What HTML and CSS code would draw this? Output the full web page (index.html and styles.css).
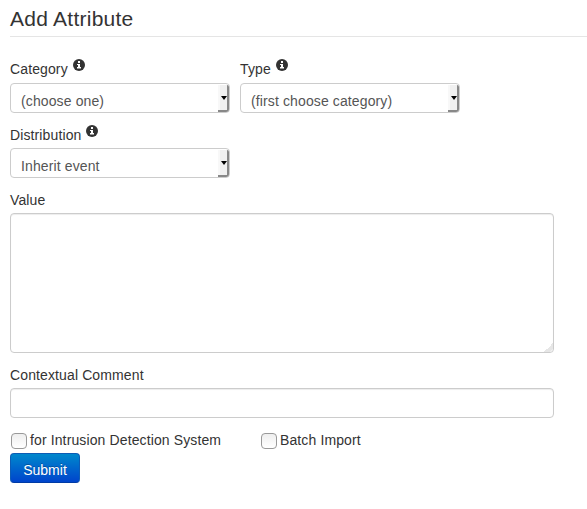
FILE: index.html
```
<!DOCTYPE html>
<html lang="en">
<head>
<meta charset="utf-8">
<title>Add Attribute</title>
<link rel="stylesheet" href="styles.css">
</head>
<body>
<svg class="defs" aria-hidden="true">
  <symbol id="info" viewBox="0 0 12 12">
    <circle cx="6" cy="6" r="6" fill="#333"/>
    <path d="M5 2h2v2H5zM4 5h3v3h1v1.4H4V8h1V6H4z" fill="#fff"/>
  </symbol>
</svg>
<form class="form">
  <h1 class="legend">Add Attribute</h1>
  <div class="row">
    <div class="field">
      <label class="label"><span>Category</span><svg class="info"><use href="#info"/></svg></label>
      <div class="select"><span class="select-text">(choose one)</span><span class="arrow"></span></div>
    </div>
    <div class="field">
      <label class="label"><span>Type</span><svg class="info"><use href="#info"/></svg></label>
      <div class="select"><span class="select-text">(first choose category)</span><span class="arrow"></span></div>
    </div>
  </div>
  <div class="field">
    <label class="label"><span>Distribution</span><svg class="info"><use href="#info"/></svg></label>
    <div class="select"><span class="select-text">Inherit event</span><span class="arrow"></span></div>
  </div>
  <div class="field">
    <label class="label" for="value">Value</label>
    <div class="area-wrap">
      <textarea class="control area" id="value"></textarea>
      <svg class="grip" viewBox="0 0 9 9"><path d="M8 0h1v6L6 9H0V8h1V7h1V6h2V5h1V4h1V3h1V1h1z" fill="#e6e6e6"/></svg>
    </div>
  </div>
  <div class="field">
    <label class="label" for="comment">Contextual Comment</label>
    <input class="control" id="comment" type="text">
  </div>
  <div class="checks">
    <label class="check"><input class="box" type="checkbox"><span>for Intrusion Detection System</span></label>
    <label class="check"><input class="box" type="checkbox"><span>Batch Import</span></label>
  </div>
  <button class="submit" type="button">Submit</button>
</form>
</body>
</html>
```
FILE: styles.css
```
* { box-sizing: border-box; }
body {
  margin: 0;
  background: #fff;
  color: #333;
  font: 14px/20px "Liberation Sans", Arial, sans-serif;
  letter-spacing: .12px;
  overflow: hidden;
}
.defs { display: none; }
.form { padding-left: 10px; }
.legend {
  height: 37px;
  margin: 0 0 22px;
  border-bottom: 1px solid #e5e5e5;
  font-size: 21px;
  font-weight: 400;
  line-height: 38px;
  letter-spacing: .25px;
}
.field { margin-bottom: 12px; }
.label { display: flex; height: 20px; margin-bottom: 3px; }
.row { display: flex; gap: 10px; }
.row .label { margin-bottom: 4px; }
.info { width: 12px; height: 12px; margin-left: 5px; }
.select, .control {
  width: 544px;
  height: 30px;
  border: 1px solid #ccc;
  border-radius: 4px;
  background: #fff;
}
.select {
  display: flex;
  justify-content: space-between;
  width: 220px;
  padding-left: 10px;
  color: #555;
}
.select-text {
  height: 25px;
  padding-top: 7px;
  white-space: nowrap;
  overflow: hidden;
}
.arrow {
  position: relative;
  width: 11px;
  height: 27px;
  margin-top: 1px;
  border: solid #888;
  border-width: 0 2px 2px 0;
  border-radius: 0 2px 3px 0;
  background: linear-gradient(90deg, #f8f8f8 2px, #f0f0f0 2px);
}
.arrow::after {
  content: "";
  position: absolute;
  right: 0;
  top: 11px;
  border: solid transparent;
  border-width: 4px 3px 0;
  border-top-color: #000;
}
.control {
  display: block;
  margin: 0;
  padding: 4px 6px;
  outline: 0;
  box-shadow: inset 0 1px 1px rgba(0,0,0,.075);
}
.area-wrap { position: relative; width: 544px; }
.area { height: 140px; resize: none; }
.grip { position: absolute; right: 1px; bottom: 1px; width: 9px; height: 9px; }
.checks { display: flex; height: 23px; }
.check { display: flex; width: 250px; }
.box {
  appearance: none;
  width: 16px;
  height: 16px;
  margin: 3px 3px 0 1px;
  border: 1px solid #999;
  border-radius: 4px;
  background: linear-gradient(#eee, #fff);
}
.submit {
  display: block;
  width: 70px;
  height: 30px;
  padding: 3px 0 0;
  border: 1px solid #0d5cb5;
  border-bottom-color: #003ba5;
  border-radius: 4px;
  background: linear-gradient(#08c, #04c);
  color: #fff;
  font: 14px/20px "Liberation Sans", Arial, sans-serif;
  text-shadow: 0 -1px 0 rgba(0,0,0,.25);
}
```
